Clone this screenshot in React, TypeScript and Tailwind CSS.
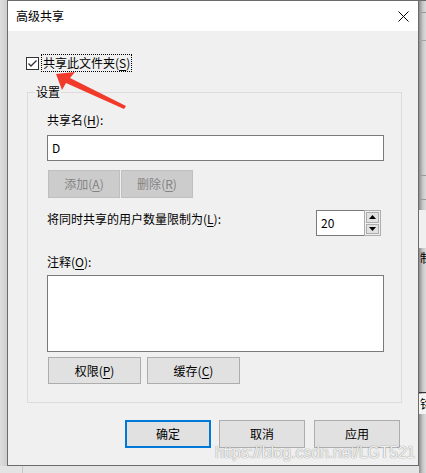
import React from 'react';

const font = { fontFamily: '"Noto Sans CJK SC", "Noto Sans", sans-serif' };

const Key: React.FC<{ k: string }> = ({ k }) => (
    <>
        (<span className="underline underline-offset-[2px]">{k}</span>)
    </>
);

const WinButton: React.FC<{ label: string; k?: string; w: string; disabled?: boolean; primary?: boolean; className?: string }> = ({
    label,
    k,
    w,
    disabled,
    primary,
    className = ''
}) => {
    const look = disabled
        ? 'bg-[#cccccc] border border-[#bfbfbf] text-[#838383]'
        : primary
            ? 'bg-[#e1e1e1] border-2 border-[#0078d7] text-black'
            : 'bg-[#e1e1e1] border border-[#adadad] text-black';
    return (
        <div className={`${w} flex items-center justify-center text-[12px] leading-[16px] ${look} ${className}`}>
            {label}
            {k && <Key k={k} />}
        </div>
    );
};

const SpinBox: React.FC<{ value: string }> = ({ value }) => (
    <div className="flex h-[26px]">
        <div className="w-[48px] h-[26px] bg-white border border-[#7a7a7a] border-r-0 flex items-center pl-[4px] text-[12px]">
            {value}
        </div>
        <div className="w-[17px] h-[26px] border border-[#adadad] flex flex-col p-[1px] gap-[1px] bg-[#f0f0f0]">
            <div className="flex-1 bg-[#e1e1e1] border border-[#adadad] flex items-center justify-center">
                <svg width="7" height="4" viewBox="0 0 7 4"><polygon points="3.5,0 7,4 0,4" fill="#000" /></svg>
            </div>
            <div className="flex-1 bg-[#e1e1e1] border border-[#adadad] flex items-center justify-center">
                <svg width="7" height="4" viewBox="0 0 7 4"><polygon points="0,0 7,0 3.5,4" fill="#000" /></svg>
            </div>
        </div>
    </div>
);

export default function App() {
    return (
        <div className="relative w-[426px] h-[473px] overflow-hidden bg-[#e4e4e4] text-black" style={font}>
            {/* background window fragments */}
            <div className="absolute left-0 top-0 w-[7px] h-[466px] bg-gradient-to-r from-[#dedede] to-[#cfcfcf]" />
            <div className="absolute left-[22px] top-[466px] w-px h-[7px] bg-[#c8c8c8]" />
            <div className="absolute left-[419px] top-0 w-[7px] h-[473px] bg-gradient-to-r from-[#8c8c8c] via-[#c4c4c4] to-[#dcdcdc] overflow-hidden">
                <div className="absolute left-0 top-0 w-full h-px bg-[#6b6b6b]" />
                <div className="absolute left-0 top-[12px] w-full h-px bg-[#9a9a9a]" />
                <div className="absolute left-0 top-[40px] w-full h-px bg-[#a6a6a6]" />
                <div className="absolute left-0 top-[175px] w-full h-px bg-[#9a9a9a]" />
                <div className="absolute left-0 top-[199px] w-full h-px bg-[#9a9a9a]" />
                <div className="absolute left-0 top-[210px] w-full h-[38px] bg-[#f0f0f0]" />
                <div className="absolute left-[1px] top-[250px] text-[12px] leading-[16px]">制</div>
                <div className="absolute left-0 top-[392px] w-full h-px bg-[#333]" />
                <div className="absolute left-0 top-[394px] w-full h-[20px] bg-[#f4f4f4]" />
                <div className="absolute left-[1px] top-[396px] text-[12px] leading-[16px]">铭</div>
            </div>

            {/* dialog */}
            <div className="ml-[7px] w-[412px] h-[466px] border border-[#6b6b6b] flex flex-col bg-[#f0f0f0]">
                <div className="h-[30px] bg-white flex items-center justify-between pl-[8px] pr-[9px] text-[12px]">
                    <span>高级共享</span>
                    <svg width="11" height="11" viewBox="0 0 11 11">
                        <path d="M0.5 0.5 L10.5 10.5 M10.5 0.5 L0.5 10.5" stroke="#000" strokeWidth="1" />
                    </svg>
                </div>

                <div className="flex-1 flex flex-col">
                    <div className="mt-[23px] ml-[18px] flex items-center h-[18px]">
                        <div className="w-[13px] h-[13px] border border-[#333333] bg-white flex items-center justify-center">
                            <svg width="11" height="11" viewBox="0 0 11 11">
                                <path d="M1.5 5.5 L4 8 L9.5 2.5" stroke="#333" strokeWidth="1.4" fill="none" />
                            </svg>
                        </div>
                        <div className="ml-[2px] border border-dotted border-black px-[1px] text-[12px] leading-[16px]">
                            共享此文件夹<Key k="S" />
                        </div>
                    </div>

                    <div className="mt-[20px] ml-[19px] w-[375px] h-[311px] border border-[#dcdcdc] relative pl-[19px] flex flex-col">
                        <div className="absolute -top-[9px] left-[7px] px-[1px] bg-[#f0f0f0] text-[12px] leading-[16px]">设置</div>

                        <div className="mt-[19px] text-[12px] leading-[16px]">
                            共享名<Key k="H" />:
                        </div>
                        <div className="mt-[7px] w-[337px] h-[26px] bg-white border border-[#7a7a7a] flex items-center pl-[4px] text-[12px]">
                            D
                        </div>
                        <div className="mt-[9px] ml-[1px] flex gap-[1px]">
                            <WinButton label="添加" k="A" w="w-[72px] h-[28px]" disabled />
                            <WinButton label="删除" k="R" w="w-[72px] h-[28px]" disabled />
                        </div>
                        <div className="mt-[12px] w-[334px] flex justify-between items-start">
                            <div className="mt-[1px] text-[12px] leading-[16px]">
                                将同时共享的用户数量限制为<Key k="L" />:
                            </div>
                            <SpinBox value="20" />
                        </div>
                        <div className="mt-[18px] text-[12px] leading-[16px]">
                            注释<Key k="O" />:
                        </div>
                        <div className="mt-[5px] w-[337px] h-[77px] bg-white border border-[#7a7a7a]" />
                        <div className="mt-[5px] ml-[1px] flex gap-[6px]">
                            <WinButton label="权限" k="P" w="w-[93px] h-[27px]" />
                            <WinButton label="缓存" k="C" w="w-[93px] h-[27px]" />
                        </div>
                    </div>

                    <div className="mt-[17px] flex">
                        <WinButton label="确定" w="w-[86px] h-[28px]" primary className="ml-[117px]" />
                        <WinButton label="取消" w="w-[86px] h-[28px]" className="ml-[8px]" />
                        <WinButton label="应用" w="w-[86px] h-[28px]" className="ml-[9px]" />
                    </div>
                </div>
            </div>

            {/* annotation arrow */}
            <svg className="absolute left-0 top-0 pointer-events-none" width="426" height="473" viewBox="0 0 426 473">
                <polygon points="56,74 75,72 70,78 126,106 124,109 66,83 62,90" fill="#f23a2a" />
            </svg>

            {/* watermark */}
            <div
                className="absolute left-[215px] top-[444px] text-[15.6px] leading-[18px] text-[rgba(255,255,255,0.9)] whitespace-nowrap pointer-events-none"
                style={{ fontFamily: '"Liberation Sans", Arial, sans-serif', textShadow: '0 0 1px rgba(110,110,110,0.7), 0 0 1px rgba(110,110,110,0.5)' }}
            >
                https://blog.csdn.net/LGT521
            </div>
        </div>
    );
}
